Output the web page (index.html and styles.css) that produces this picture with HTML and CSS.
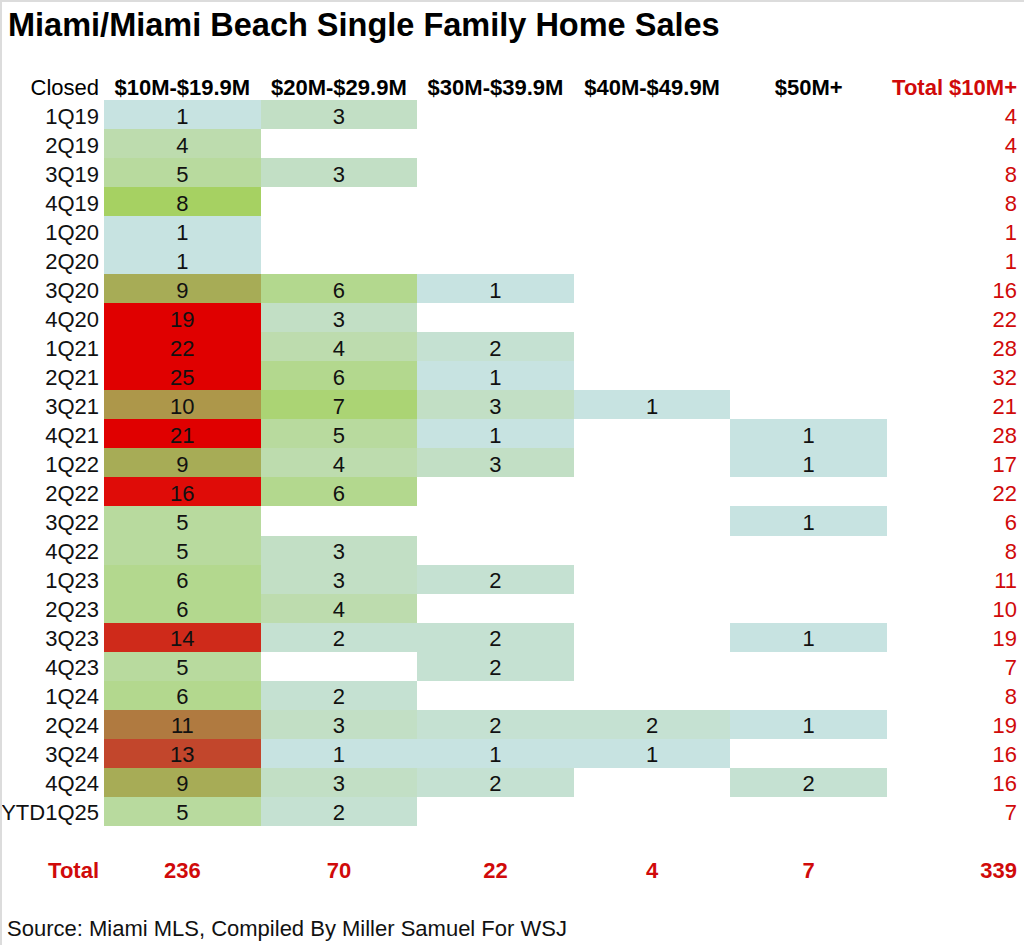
FILE: index.html
```html
<!DOCTYPE html>
<html lang="en">
<head>
<meta charset="utf-8">
<title>Miami/Miami Beach Single Family Home Sales</title>
<link rel="stylesheet" href="styles.css">
</head>
<body>
<div class="page">
  <h1 class="title">Miami/Miami Beach Single Family Home Sales</h1>
  <div class="table">
    <div class="hd label">Closed</div>
    <div class="hd">$10M-$19.9M</div>
    <div class="hd">$20M-$29.9M</div>
    <div class="hd">$30M-$39.9M</div>
    <div class="hd">$40M-$49.9M</div>
    <div class="hd">$50M+</div>
    <div class="hd total red">Total $10M+</div>

    <div class="label">1Q19</div><div class="c v1">1</div><div class="c v3">3</div><div class="c"></div><div class="c"></div><div class="c"></div><div class="total red">4</div>
    <div class="label">2Q19</div><div class="c v4">4</div><div class="c"></div><div class="c"></div><div class="c"></div><div class="c"></div><div class="total red">4</div>
    <div class="label">3Q19</div><div class="c v5">5</div><div class="c v3">3</div><div class="c"></div><div class="c"></div><div class="c"></div><div class="total red">8</div>
    <div class="label">4Q19</div><div class="c v8">8</div><div class="c"></div><div class="c"></div><div class="c"></div><div class="c"></div><div class="total red">8</div>
    <div class="label">1Q20</div><div class="c v1">1</div><div class="c"></div><div class="c"></div><div class="c"></div><div class="c"></div><div class="total red">1</div>
    <div class="label">2Q20</div><div class="c v1">1</div><div class="c"></div><div class="c"></div><div class="c"></div><div class="c"></div><div class="total red">1</div>
    <div class="label">3Q20</div><div class="c v9">9</div><div class="c v6">6</div><div class="c v1">1</div><div class="c"></div><div class="c"></div><div class="total red">16</div>
    <div class="label">4Q20</div><div class="c vmax">19</div><div class="c v3">3</div><div class="c"></div><div class="c"></div><div class="c"></div><div class="total red">22</div>
    <div class="label">1Q21</div><div class="c vmax">22</div><div class="c v4">4</div><div class="c v2">2</div><div class="c"></div><div class="c"></div><div class="total red">28</div>
    <div class="label">2Q21</div><div class="c vmax">25</div><div class="c v6">6</div><div class="c v1">1</div><div class="c"></div><div class="c"></div><div class="total red">32</div>
    <div class="label">3Q21</div><div class="c v10">10</div><div class="c v7">7</div><div class="c v3">3</div><div class="c v1">1</div><div class="c"></div><div class="total red">21</div>
    <div class="label">4Q21</div><div class="c vmax">21</div><div class="c v5">5</div><div class="c v1">1</div><div class="c"></div><div class="c v1">1</div><div class="total red">28</div>
    <div class="label">1Q22</div><div class="c v9">9</div><div class="c v4">4</div><div class="c v3">3</div><div class="c"></div><div class="c v1">1</div><div class="total red">17</div>
    <div class="label">2Q22</div><div class="c v16">16</div><div class="c v6">6</div><div class="c"></div><div class="c"></div><div class="c"></div><div class="total red">22</div>
    <div class="label">3Q22</div><div class="c v5">5</div><div class="c"></div><div class="c"></div><div class="c"></div><div class="c v1">1</div><div class="total red">6</div>
    <div class="label">4Q22</div><div class="c v5">5</div><div class="c v3">3</div><div class="c"></div><div class="c"></div><div class="c"></div><div class="total red">8</div>
    <div class="label">1Q23</div><div class="c v6">6</div><div class="c v3">3</div><div class="c v2">2</div><div class="c"></div><div class="c"></div><div class="total red">11</div>
    <div class="label">2Q23</div><div class="c v6">6</div><div class="c v4">4</div><div class="c"></div><div class="c"></div><div class="c"></div><div class="total red">10</div>
    <div class="label">3Q23</div><div class="c v14">14</div><div class="c v2">2</div><div class="c v2">2</div><div class="c"></div><div class="c v1">1</div><div class="total red">19</div>
    <div class="label">4Q23</div><div class="c v5">5</div><div class="c"></div><div class="c v2">2</div><div class="c"></div><div class="c"></div><div class="total red">7</div>
    <div class="label">1Q24</div><div class="c v6">6</div><div class="c v2">2</div><div class="c"></div><div class="c"></div><div class="c"></div><div class="total red">8</div>
    <div class="label">2Q24</div><div class="c v11">11</div><div class="c v3">3</div><div class="c v2">2</div><div class="c v2">2</div><div class="c v1">1</div><div class="total red">19</div>
    <div class="label">3Q24</div><div class="c v13">13</div><div class="c v1">1</div><div class="c v1">1</div><div class="c v1">1</div><div class="c"></div><div class="total red">16</div>
    <div class="label">4Q24</div><div class="c v9">9</div><div class="c v3">3</div><div class="c v2">2</div><div class="c"></div><div class="c v2">2</div><div class="total red">16</div>
    <div class="label">YTD1Q25</div><div class="c v5">5</div><div class="c v2">2</div><div class="c"></div><div class="c"></div><div class="c"></div><div class="total red">7</div>

    <div class="spacer"></div>

    <div class="label red bold">Total</div>
    <div class="c red bold">236</div>
    <div class="c red bold">70</div>
    <div class="c red bold">22</div>
    <div class="c red bold">4</div>
    <div class="c red bold">7</div>
    <div class="total red bold">339</div>
  </div>
  <p class="source">Source: Miami MLS, Compiled By Miller Samuel For WSJ</p>
</div>
</body>
</html>
```

FILE: styles.css
```css
html, body {
  margin: 0;
  padding: 0;
  background: #ffffff;
}

body {
  font-family: "Liberation Sans", Arial, sans-serif;
  color: #111111;
}

.page {
  width: 1024px;
  height: 945px;
  box-sizing: border-box;
  border-top: 2px solid #dcdcdc;
  border-left: 2px solid #dcdcdc;
  overflow: hidden;
}

.title {
  margin: 0;
  padding: 5px 0 0 6px;
  font-size: 32.5px;
  line-height: 36px;
  font-weight: bold;
  color: #000000;
}

.table {
  display: grid;
  grid-template-columns: 102px repeat(5, 156.6px) 1fr;
  grid-auto-rows: 29.04px;
  margin-top: 28px;
  font-size: 22px;
}

.table > div {
  display: flex;
  align-items: center;
  justify-content: center;
  box-sizing: border-box;
  padding-top: 4px;
  white-space: nowrap;
}

.table > .label {
  justify-content: flex-end;
  padding-right: 5px;
}

.table > .total {
  justify-content: flex-end;
  padding-right: 7px;
}

.hd {
  font-weight: bold;
  color: #000000;
}

.hd.label {
  font-weight: normal;
}

.spacer {
  grid-column: 1 / -1;
}

.red {
  color: #d00a0a;
}

.hd.red {
  color: #d00a0a;
}

.bold {
  font-weight: bold;
}

.v1 { background: #c7e3e1; }
.v2 { background: #c5e1d2; }
.v3 { background: #c2dfc5; }
.v4 { background: #bddcae; }
.v5 { background: #b8da9e; }
.v6 { background: #b3d88e; }
.v7 { background: #abd474; }
.v8 { background: #a6d162; }
.v9 { background: #a7ac56; }
.v10 { background: #ad974a; }
.v11 { background: #b07a40; }
.v13 { background: #c2462c; }
.v14 { background: #cf2a1a; }
.v16 { background: #df0c08; }
.vmax { background: #e00000; }

.source {
  margin: 33px 0 0 0;
  padding-left: 5px;
  font-size: 22px;
  line-height: 24px;
  color: #111111;
}
```
